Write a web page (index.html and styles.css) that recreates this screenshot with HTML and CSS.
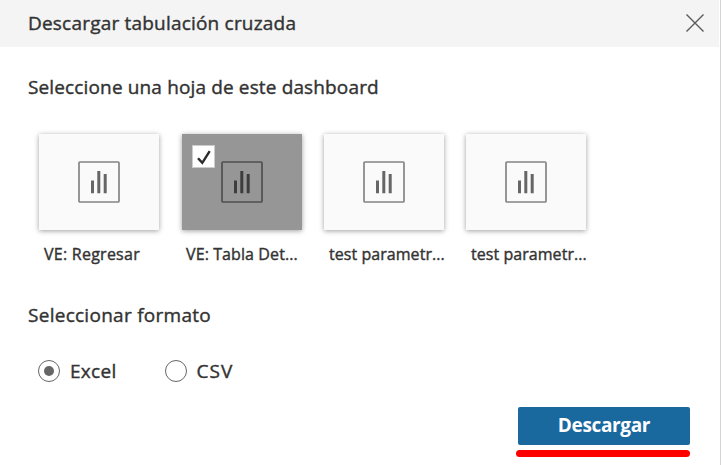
FILE: index.html
```html
<!DOCTYPE html>
<html lang="es">
<head>
  <meta charset="UTF-8">
  <title>Descargar tabulación cruzada</title>
  <link rel="stylesheet" href="styles.css">
</head>
<body>
  <svg class="defs" width="0" height="0">
    <symbol id="sheet" viewBox="0 0 42 42">
      <rect x="1" y="1" width="40" height="40" rx="1" fill="none" stroke="currentColor" stroke-width="1.7" opacity="0.8"/>
      <path d="M13 19.5h3V32.3h-3zM19.3 10h3v22.3h-3zM25.7 13h3v19.3h-3z" fill="currentColor"/>
    </symbol>
  </svg>

  <div class="dialog">
    <header class="dialog-header">
      <h1 class="title">Descargar tabulación cruzada</h1>
      <button class="close" aria-label="Cerrar">
        <svg width="18" height="18" viewBox="0 0 18 18"><path d="M.5.5l17 17M17.5.5l-17 17" stroke="#5a5a5a" stroke-width="1.4"/></svg>
      </button>
    </header>

    <main class="content">
      <h2 class="heading heading-sheets">Seleccione una hoja de este dashboard</h2>
      <div class="sheets">
        <div class="sheet">
          <div class="thumb"><svg class="icon"><use href="#sheet"/></svg></div>
          <div class="name name-regresar">VE: Regresar</div>
        </div>
        <div class="sheet">
          <div class="thumb selected">
            <span class="check"><svg width="22" height="22" viewBox="0 0 22 22"><path d="M5 12.3l4.3 4.6L16.7 5.2" fill="none" stroke="#2b2b2b" stroke-width="2.4"/></svg></span>
            <svg class="icon"><use href="#sheet"/></svg>
          </div>
          <div class="name name-tabla">VE: Tabla Det...</div>
        </div>
        <div class="sheet">
          <div class="thumb"><svg class="icon"><use href="#sheet"/></svg></div>
          <div class="name">test parametr...</div>
        </div>
        <div class="sheet">
          <div class="thumb"><svg class="icon"><use href="#sheet"/></svg></div>
          <div class="name">test parametr...</div>
        </div>
      </div>

      <h2 class="heading heading-format">Seleccionar formato</h2>
      <div class="formats">
        <label class="format"><span class="radio on"></span><span class="excel">Excel</span></label>
        <label class="format"><span class="radio"></span><span class="csv">CSV</span></label>
      </div>
    </main>

    <footer class="actions">
      <button class="download">Descargar</button>
      <div class="underline"></div>
    </footer>
  </div>
</body>
</html>
```
FILE: styles.css
```css
* {
  box-sizing: border-box;
}
body {
  margin: 0;
  background: #fff;
  color: #333;
  font-family: "Open Sans", "Noto Sans", sans-serif;
  -webkit-text-stroke: 0.4px;
}
.defs {
  display: block;
}
.dialog {
  width: 721px;
  height: 465px;
  border-right: 1px solid #d4d4d4;
  overflow: hidden;
}
.dialog-header {
  display: flex;
  align-items: center;
  justify-content: space-between;
  width: 719px;
  height: 47px;
  padding: 0 15px 0 28px;
  background: #f4f4f4;
}
.title,
.heading {
  margin: 0;
  font-size: 19px;
  font-weight: 400;
  line-height: 26px;
  letter-spacing: 0.14px;
  white-space: nowrap;
}
.title {
  padding-bottom: 2px;
  letter-spacing: 0.2px;
}
.close {
  display: flex;
  padding: 0 0 1px;
  border: 0;
  background: none;
}
.content {
  padding: 27px 28px 0;
}
.sheets {
  display: flex;
  gap: 22px;
  padding: 34px 0 0 11px;
}
.sheet {
  width: 120px;
}
.sheet:first-child {
  margin-right: 1px;
}
.thumb {
  position: relative;
  display: flex;
  align-items: center;
  justify-content: center;
  height: 96px;
  background: #fafafa;
  color: #666;
  box-shadow: 0 1px 5px rgba(0, 0, 0, 0.38);
}
.selected {
  background: #969696;
  color: #3d3d3d;
}
.icon {
  width: 42px;
  height: 42px;
}
.check {
  position: absolute;
  top: 11px;
  left: 10px;
  width: 23px;
  height: 23px;
  border: 1px solid #ccc;
  background: #fff;
}
.check svg {
  display: block;
}
.name {
  padding: 13px 0 0 5px;
  font-size: 16px;
  line-height: 22px;
  letter-spacing: 0.05px;
  white-space: nowrap;
}
.name-regresar {
  letter-spacing: 0.25px;
}
.name-tabla {
  padding-left: 4px;
  letter-spacing: 0.1px;
}
.heading-format {
  margin-top: 37px;
  letter-spacing: 0.27px;
}
.formats {
  display: flex;
  gap: 48px;
  padding: 30px 0 0 10px;
}
.format {
  display: flex;
  align-items: center;
  gap: 10px;
  height: 26px;
  font-size: 19px;
}
.excel {
  letter-spacing: 0.3px;
}
.csv {
  letter-spacing: 1px;
}
.radio {
  display: flex;
  align-items: center;
  justify-content: center;
  width: 22px;
  height: 22px;
  border: 1px solid #666;
  border-radius: 50%;
}
.on::after {
  content: "";
  width: 10px;
  height: 10px;
  border-radius: 50%;
  background: #666;
}
.actions {
  display: flex;
  flex-direction: column;
  align-items: flex-end;
  padding: 23px 30px 0 0;
}
.download {
  width: 172px;
  height: 38px;
  padding: 0 0 2px;
  border: 0;
  border-radius: 2px;
  background: #1a699e;
  color: #fff;
  font-family: inherit;
  font-size: 19px;
  font-weight: 700;
  letter-spacing: -0.35px;
  -webkit-text-stroke: 0;
}
.underline {
  width: 174px;
  height: 7px;
  margin-top: 5px;
  border-radius: 4px;
  background: #f00;
}
```
